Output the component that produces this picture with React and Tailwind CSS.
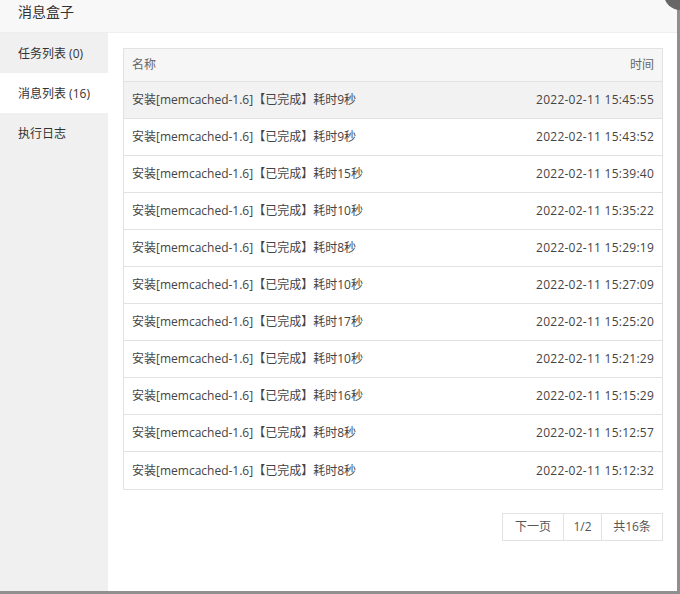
import React from "react";

const rows = [
  ["9秒", "2022-02-11 15:45:55"],
  ["9秒", "2022-02-11 15:43:52"],
  ["15秒", "2022-02-11 15:39:40"],
  ["10秒", "2022-02-11 15:35:22"],
  ["8秒", "2022-02-11 15:29:19"],
  ["10秒", "2022-02-11 15:27:09"],
  ["17秒", "2022-02-11 15:25:20"],
  ["10秒", "2022-02-11 15:21:29"],
  ["16秒", "2022-02-11 15:15:29"],
  ["8秒", "2022-02-11 15:12:57"],
  ["8秒", "2022-02-11 15:12:32"],
];

const tabs = ["任务列表 (0)", "消息列表 (16)", "执行日志"];

export default function App() {
  return (
    <div
      className="relative w-[680px] h-[594px] overflow-hidden bg-white text-[12px] text-[#333]"
      style={{ fontFamily: '"Open Sans", "Noto Sans CJK SC", sans-serif' }}
    >
      <div className="flex flex-col h-full border-r-[3px] border-b-[3px] border-[#8f8f8f]">
        <div className="h-[33px] shrink-0 flex items-center pl-[18px] bg-[#f8f8f8] border-b border-[#eee] text-[14px] text-[#333] pb-[9px]">
          消息盒子
        </div>
        <div className="flex flex-1 min-h-0">
          <div className="w-[108px] shrink-0 bg-[#f0f0f0]">
            {tabs.map((t, i) => (
              <div
                key={t}
                className={`h-[40px] flex items-center pl-[18px] pt-[1px] ${i === 1 ? "bg-white" : ""}`}
              >
                {t}
              </div>
            ))}
          </div>
          <div className="flex-1 pl-[15px] pr-[14px] pt-[15px]">
            <div className="border border-[#e2e2e2]">
              <div className="h-[33px] flex items-center justify-between px-[8px] bg-[#f6f6f6] text-[#666] border-b border-[#e2e2e2]">
                <span>名称</span>
                <span>时间</span>
              </div>
              {rows.map(([d, t], i) => (
                <div
                  key={t}
                  className={`h-[37px] flex items-center justify-between px-[8px] text-[#444] ${
                    i < rows.length - 1 ? "border-b border-[#e2e2e2]" : ""
                  } ${i === 0 ? "bg-[#f2f2f2]" : ""}`}
                >
                  <span>安装[memcached-1.6]【已完成】耗时{d}</span>
                  <span className="tracking-[0.25px]">{t}</span>
                </div>
              ))}
            </div>
            <div className="flex justify-end mt-[23px]">
              <div className="flex h-[28px] border border-[#e2e2e2] text-[#555]">
                <div className="w-[61px] flex items-center justify-center border-r border-[#e2e2e2]">下一页</div>
                <div className="w-[38px] flex items-center justify-center border-r border-[#e2e2e2]">1/2</div>
                <div className="w-[60px] flex items-center justify-center">共16条</div>
              </div>
            </div>
          </div>
        </div>
      </div>
      <div className="absolute right-[-16px] top-[-22px] w-[32px] h-[32px] rounded-full bg-[#666]" />
    </div>
  );
}
